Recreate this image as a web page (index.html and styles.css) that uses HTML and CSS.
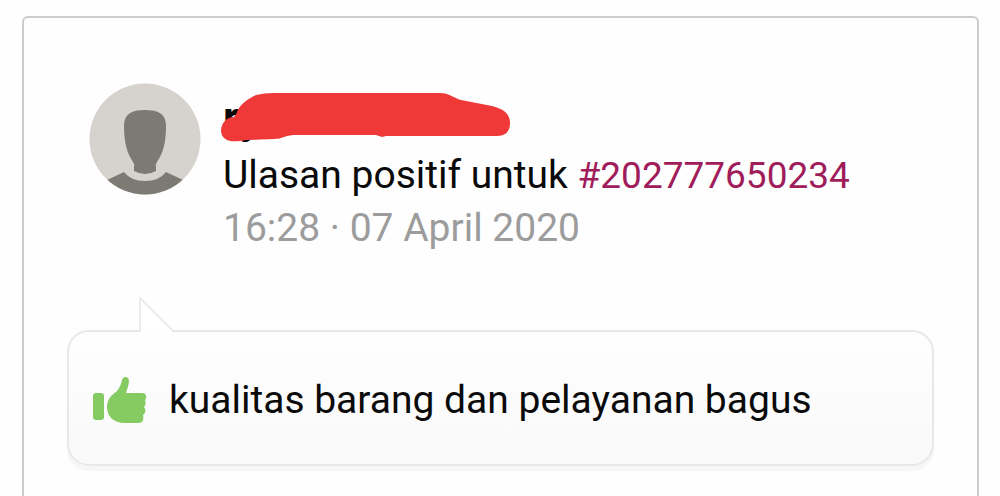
FILE: index.html
```html
<!DOCTYPE html>
<html lang="id">
<head>
    <meta charset="UTF-8">
    <meta name="viewport" content="width=device-width, initial-scale=1.0">
    <title>Ulasan</title>
    <link rel="stylesheet" href="styles.css">
</head>
<body>
    <div class="card">
        <div class="header">
            <svg class="avatar" viewBox="0 0 112 112">
                <defs>
                    <clipPath id="circle"><circle cx="56" cy="56" r="55.5"/></clipPath>
                </defs>
                <g clip-path="url(#circle)">
                    <rect width="112" height="112" fill="#d6d3ce"/>
                    <path fill="#7b7b74" d="M56 27C70 27 77 31 77 43C77 60 74 70 68 79Q66 82 67 84V88Q56 94 45 88V84Q46 82 44 79C38 70 35 60 35 43C35 31 42 27 56 27Z"/>
                    <path fill="#7b7b74" d="M18 97L35 89Q42 98 56 98Q70 98 77 89L94 97V112H18Z"/>
                </g>
            </svg>
            <div class="info">
                <div class="name">
                    <span>ry</span>
                    <svg class="scribble" viewBox="0 0 292 52">
                        <path fill="#ef3939" d="M14 25Q17 22 17 20C20 12 28 7 36 3Q44 1 54 1H220C229 1 234 6 241 8L272 14C284 17 290 22 290 31C290 40 285 44 277 44H166L162 45L156 43H74C66 43 62 47 54 47L26 48C11 51 2 49 1 39C1 31 7 25 14 25Z"/>
                    </svg>
                </div>
                <div class="title">Ulasan positif untuk <a href="#">#202777650234</a></div>
                <div class="date">16:28 · 07 April 2020</div>
            </div>
        </div>
        <div class="bubble">
            <svg class="tail" viewBox="0 0 36 36">
                <path fill="#fff" stroke="#e6e6e6" stroke-width="1.5" d="M1 36V2L35 36"/>
            </svg>
            <svg class="thumb" viewBox="0 0 54 48">
                <rect x="0" y="17" width="11" height="27" rx="3" fill="#86cb62"/>
                <path fill="#86cb62" d="M29 4C30 0 36 0 36 5C36 9 34 13 33 17H49C54 17 54 22 52 24C53 26 53 29 51 31C53 33 53 37 50 39C51 43 50 47 46 47H32C20 47 14 40 14 31C14 24 18 19 23 16C27 12 28 8 29 4Z"/>
            </svg>
            <p>kualitas barang dan pelayanan bagus</p>
        </div>
    </div>
</body>
</html>
```

FILE: styles.css
```css
* {
    margin: 0;
    padding: 0;
    box-sizing: border-box;
}
body {
    display: flex;
    min-height: 100vh;
    padding: 16px 21px 0 22px;
    font-family: Roboto, sans-serif;
    font-size: 39px;
    line-height: 53px;
    color: #0a0a0a;
    background-color: #fefefe;
}
.card {
    flex: 1;
    padding: 65px 43px 28px;
    border: 2px solid #ccc;
    border-bottom: 0;
    border-radius: 6px 6px 0 0;
}


.header {
    display: flex;
    gap: 22px;
    padding-left: 22px;
}
.avatar {
    flex: none;
    width: 112px;
    height: 112px;
}
.info {
    white-space: nowrap;
}
.name {
    position: relative;
    height: 66px;
    line-height: 70px;
    font-size: 44px;
    font-weight: bold;
}
.scribble {
    position: absolute;
    left: -3px;
    top: 9px;
    width: 292px;
    height: 52px;
}
.title a {
    font-size: 37px;
    color: #a01c5a;
    text-decoration: none;
}
.date {
    color: #9c9c9c;
}


.bubble {
    position: relative;
    display: flex;
    align-items: center;
    gap: 22px;
    height: 136px;
    margin-top: 75px;
    padding: 4px 24px 0;
    border: 2px solid #e8e8e8;
    border-radius: 22px;
    background: linear-gradient(#fefefe, #f9f9f9);
    box-shadow: 0 5px 1px #f6f6f6;
}
.tail {
    position: absolute;
    left: 70px;
    top: -36px;
    width: 36px;
    height: 36px;
}
.thumb {
    flex: none;
    width: 54px;
    height: 48px;
}
```
